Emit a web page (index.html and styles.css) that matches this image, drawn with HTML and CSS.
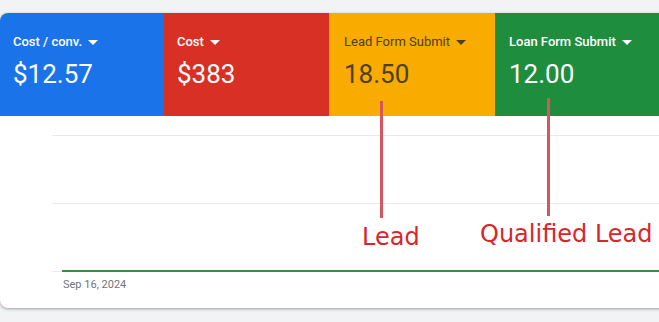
FILE: index.html
```html
<!DOCTYPE html>
<html>
<head>
<meta charset="utf-8">
<link rel="stylesheet" href="styles.css">
</head>
<body>
<div class="card">
  <div class="tiles">
    <div class="tile blue">
      <div class="label">Cost / conv. <svg class="caret" width="10" height="5" viewBox="0 0 10 5"><polygon points="0,0 10,0 5,5"/></svg></div>
      <div class="value">$12.57</div>
    </div>
    <div class="tile red">
      <div class="label">Cost <svg class="caret" width="10" height="5" viewBox="0 0 10 5"><polygon points="0,0 10,0 5,5"/></svg></div>
      <div class="value">$383</div>
    </div>
    <div class="tile yellow">
      <div class="label">Lead Form Submit <svg class="caret" width="10" height="5" viewBox="0 0 10 5"><polygon points="0,0 10,0 5,5"/></svg></div>
      <div class="value">18.50</div>
    </div>
    <div class="tile green">
      <div class="label">Loan Form Submit <svg class="caret" width="10" height="5" viewBox="0 0 10 5"><polygon points="0,0 10,0 5,5"/></svg></div>
      <div class="value">12.00</div>
    </div>
  </div>
  <div class="chart">
    <div class="grid-row"></div>
    <div class="grid-row"></div>
    <div class="axis"><div class="series"></div></div>
    <div class="date">Sep 16, 2024</div>
  </div>
  <div class="mark mark-lead"></div>
  <div class="mark mark-qual"></div>
  <div class="note note-lead">Lead</div>
  <div class="note note-qual">Qualified Lead</div>
</div>
</body>
</html>
```
FILE: styles.css
```css
html, body {
  margin: 0;
  padding: 0;
}
body {
  background: #f1f3f4;
  width: 659px;
  height: 322px;
  overflow: hidden;
  font-family: Roboto, "Liberation Sans", sans-serif;
}
.card {
  position: relative;
  margin-top: 13px;
  width: 680px;
  height: 295px;
  background: #fff;
  border-radius: 8px;
  overflow: hidden;
  box-shadow: 0 1px 2px rgba(60,64,67,.3), 0 1px 3px 1px rgba(60,64,67,.15);
}
.tiles {
  display: flex;
  height: 103px;
}
.tile {
  flex: 0 0 165px;
  box-sizing: border-box;
  padding: 21px 0 0 13px;
  color: #fff;
}
.tile:first-child { flex-basis: 164px; }
.blue { background: #1a73e8; }
.red { background: #d93025; }
.yellow { background: #f9ab00; color: #4b4023; padding-left: 15px; flex-basis: 166px; }
.green { background: #1e8e3e; padding-left: 14px; }
.label {
  font-size: 13px;
  line-height: 16px;
  font-weight: 500;
  display: flex;
  align-items: center;
  gap: 6px;
  white-space: nowrap;
}
.yellow .label { font-weight: 400; }
.caret { fill: currentColor; }
.value {
  margin-top: 8px;
  font-size: 26px;
  line-height: 32px;
  font-weight: 400;
}
.chart {
  padding: 19px 0 0 52px;
}
.grid-row {
  height: 67px;
  border-top: 1px solid #e8eaed;
}
.axis {
  height: 0;
  border-top: 1px solid #e8eaed;
}
.series {
  margin-left: 10px;
  margin-top: -2px;
  height: 2px;
  background: #3b8a3e;
}
.date {
  margin: 5px 0 0 11px;
  font-size: 11px;
  line-height: 16px;
  color: #70757a;
}
.mark {
  position: absolute;
  width: 3px;
  background: #d5565f;
}
.mark-lead { left: 380px; top: 88px; height: 117px; }
.mark-qual { left: 547px; top: 85px; height: 118px; }
.note {
  position: absolute;
  font-family: "DejaVu Sans", sans-serif;
  font-size: 24px;
  line-height: 24px;
  color: #d9262b;
  white-space: nowrap;
}
.note-lead { left: 362px; top: 212px; }
.note-qual { left: 480px; top: 209px; }
```
